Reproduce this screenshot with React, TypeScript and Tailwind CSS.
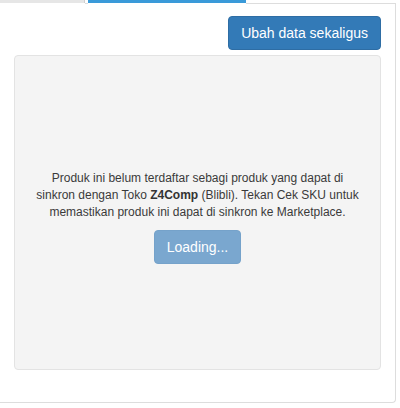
export default function App() {
  return (
    <div className="w-[400px] h-[408px] bg-white" style={{ fontFamily: '"Liberation Sans", Arial, sans-serif' }}>
      {/* Tabs strip (scrolled, only the bottom edge shows) */}
      <div className="flex h-[4px] w-[396px]">
        <div className="w-[85px] h-[3px] bg-[#e6e6e6] border-r border-[#cfcfcf]" />
        <div className="w-[3px] h-[4px] border-b border-[#dddddd]" />
        <div className="w-[158px] h-[3px] bg-[#3a9ad9]" />
        <div className="flex-1 h-[4px] border-b border-[#dddddd]" />
      </div>

      {/* Tab content */}
      <div className="w-[396px] h-[399px] border-r border-b border-[#dddddd] rounded-br-[4px] pl-[14px] pr-[14px] pt-[12px] flex flex-col">
        <div className="flex justify-end">
          <button className="h-[34px] px-[12px] rounded-[4px] bg-[#337ab7] border border-[#2e6da4] text-white text-[14px] leading-[20px]">
            Ubah data sekaligus
          </button>
        </div>

        <div className="mt-[5px] h-[315px] bg-[#f4f4f4] border border-[#e3e3e3] rounded-[4px] flex flex-col items-center justify-center pt-[8px]">
          <p className="w-[330px] text-center text-[12px] leading-[17px] text-[#3a3a3a]">
            Produk ini belum terdaftar sebagi produk yang dapat di sinkron dengan Toko <b className="text-[#333333]">Z4Comp</b> (Blibli). Tekan Cek SKU untuk memastikan produk ini dapat di sinkron ke Marketplace.
          </p>
          <button className="mt-[9px] h-[34px] px-[12px] rounded-[4px] bg-[#7aa7cf] border border-[#75a2ca] text-white text-[14px] leading-[20px] cursor-not-allowed">
            Loading...
          </button>
        </div>
      </div>
    </div>
  );
}
